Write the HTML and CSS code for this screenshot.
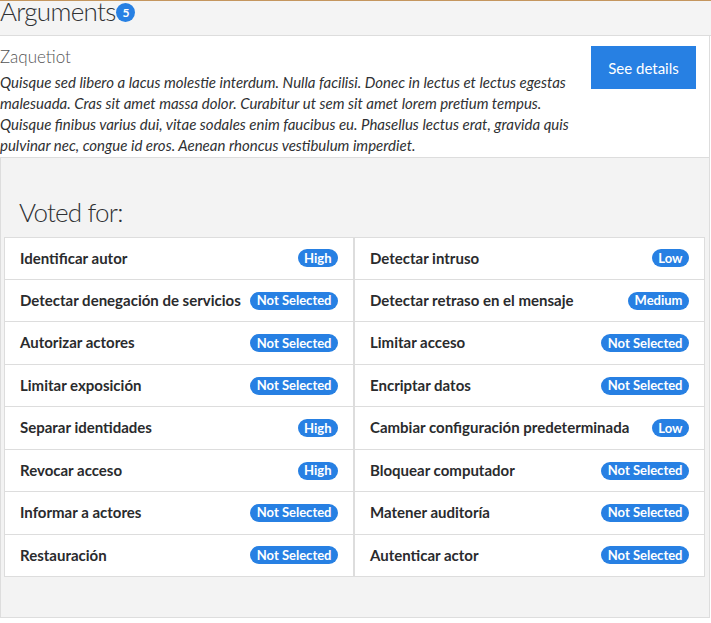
FILE: index.html
```html
<!DOCTYPE html>
<html lang="es">
<head>
<meta charset="utf-8">
<title>Arguments</title>
<link rel="stylesheet" href="styles.css">
</head>
<body>
<div class="topline"></div>
<header class="page-header">
  <h1 class="title">Arguments<span class="count">5</span></h1>
</header>
<main class="content">
  <section class="card">
    <div class="card-text">
      <h4 class="card-title">Zaquetiot</h4>
      <p class="card-desc">Quisque sed libero a lacus molestie interdum. Nulla facilisi. Donec in lectus et lectus egestas malesuada. Cras sit amet massa dolor. Curabitur ut sem sit amet lorem pretium tempus. Quisque finibus varius dui, vitae sodales enim faucibus eu. Phasellus lectus erat, gravida quis pulvinar nec, congue id eros. Aenean rhoncus vestibulum imperdiet.</p>
    </div>
    <button class="btn">See details</button>
  </section>
  <section class="votes">
    <h2 class="votes-title">Voted for:</h2>
    <div class="grid">
      <ul class="list">
        <li class="item"><span class="label">Identificar autor</span><span class="badge">High</span></li>
        <li class="item"><span class="label">Detectar denegación de servicios</span><span class="badge">Not Selected</span></li>
        <li class="item"><span class="label">Autorizar actores</span><span class="badge">Not Selected</span></li>
        <li class="item"><span class="label">Limitar exposición</span><span class="badge">Not Selected</span></li>
        <li class="item"><span class="label">Separar identidades</span><span class="badge">High</span></li>
        <li class="item"><span class="label">Revocar acceso</span><span class="badge">High</span></li>
        <li class="item"><span class="label">Informar a actores</span><span class="badge">Not Selected</span></li>
        <li class="item"><span class="label">Restauración</span><span class="badge">Not Selected</span></li>
      </ul>
      <ul class="list">
        <li class="item"><span class="label">Detectar intruso</span><span class="badge">Low</span></li>
        <li class="item"><span class="label">Detectar retraso en el mensaje</span><span class="badge">Medium</span></li>
        <li class="item"><span class="label">Limitar acceso</span><span class="badge">Not Selected</span></li>
        <li class="item"><span class="label">Encriptar datos</span><span class="badge">Not Selected</span></li>
        <li class="item"><span class="label">Cambiar configuración predeterminada</span><span class="badge">Low</span></li>
        <li class="item"><span class="label">Bloquear computador</span><span class="badge">Not Selected</span></li>
        <li class="item"><span class="label">Matener auditoría</span><span class="badge">Not Selected</span></li>
        <li class="item"><span class="label">Autenticar actor</span><span class="badge">Not Selected</span></li>
      </ul>
    </div>
  </section>
</main>
</body>
</html>
```

FILE: styles.css
```css
* { box-sizing: border-box; }

html, body {
  margin: 0;
  padding: 0;
  background: #ffffff;
  font-family: Lato, "Liberation Sans", sans-serif;
  color: #2f3133;
}

.topline {
  height: 1px;
  background: #c4965e;
}

.page-header {
  height: 35px;
  background: #f4f4f4;
  border-bottom: 1px solid #dddddd;
}

.title {
  margin: 0;
  height: 20px;
  font-size: 26px;
  line-height: 20px;
  letter-spacing: -0.7px;
  font-weight: 300;
  color: #2f3133;
  display: flex;
  align-items: flex-start;
}

.count {
  display: inline-flex;
  align-items: center;
  justify-content: center;
  width: 19px;
  height: 19px;
  margin-left: 1px;
  margin-top: 2px;
  border-radius: 50%;
  background: #2780e3;
  color: #ffffff;
  font-size: 12px;
  letter-spacing: 0;
  line-height: 1;
  font-weight: 700;
}

.content {
  width: 710px;
  border-right: 1px solid #dddddd;
}

.card {
  display: flex;
  justify-content: space-between;
  align-items: flex-start;
  background: #ffffff;
  height: 121px;
  padding-right: 13px;
}

.card-text {
  width: 586px;
}

.card-title {
  margin: 12px 0 5px 0;
  font-size: 17px;
  line-height: 1.1;
  font-weight: 300;
  color: #555555;
}

.card-desc {
  margin: 0;
  font-size: 15px;
  line-height: 21px;
  font-style: italic;
  color: #2f3133;
}

.btn {
  margin-top: 10px;
  width: 105px;
  height: 43px;
  border: 0;
  background: #2780e3;
  color: #ffffff;
  font-family: inherit;
  font-size: 15px;
  padding: 0;
  cursor: pointer;
}

.votes {
  background: #f3f3f3;
  border: 1px solid #dddddd;
  border-right: 0;
  height: 461px;
  padding: 0 4px 0 3px;
}

.votes-title {
  margin: 40px 0 10px 15px;
  font-size: 26px;
  line-height: 1.1;
  letter-spacing: -0.8px;
  font-weight: 300;
  color: #2f3133;
}

.grid {
  display: grid;
  grid-template-columns: 350px 351px;
}

.list {
  list-style: none;
  margin: 0;
  padding: 0;
  background: #ffffff;
  border: 1px solid #dddddd;
}

.item {
  display: flex;
  justify-content: space-between;
  align-items: center;
  padding: 10px 15px;
  line-height: 21.43px;
  font-size: 15px;
  font-weight: 700;
  color: #2a2b2d;
}

.item + .item {
  border-top: 1px solid #dddddd;
}

.badge {
  display: inline-block;
  padding: 2.5px 6.5px;
  font-size: 13px;
  line-height: 1;
  font-weight: 700;
  color: #ffffff;
  background: #2780e3;
  border-radius: 10px;
  white-space: nowrap;
}
```
